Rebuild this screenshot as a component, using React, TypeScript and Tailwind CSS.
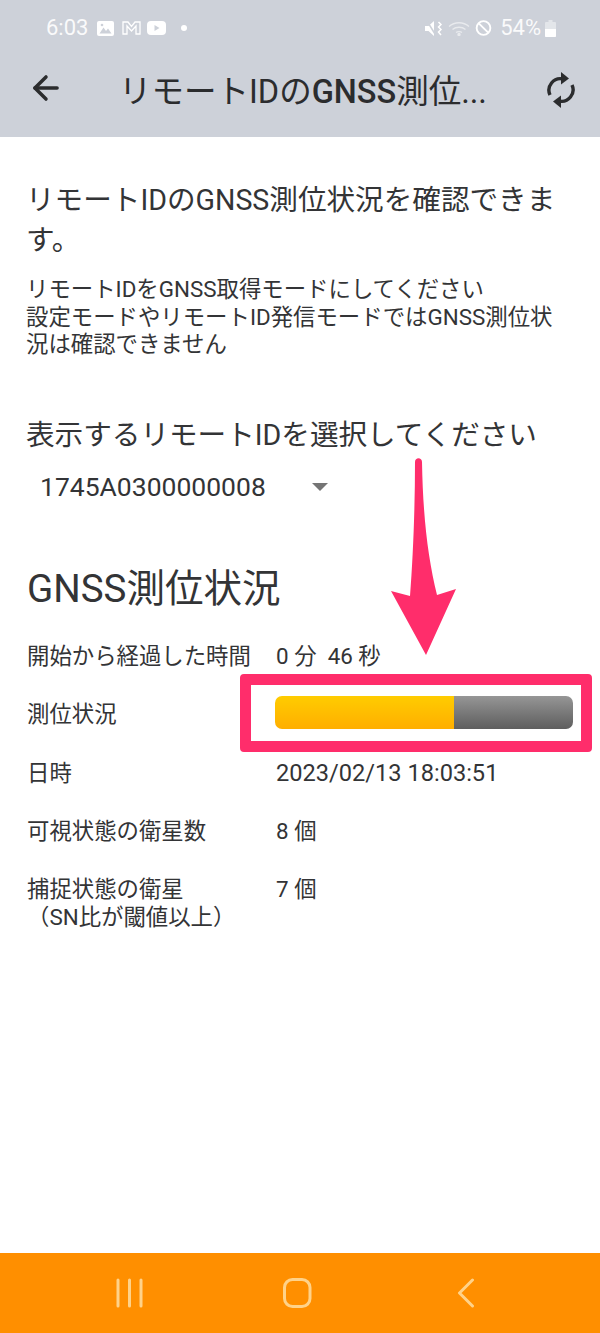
import React from 'react';
import { ArrowLeft } from 'lucide-react';

const font = { fontFamily: '"Roboto", "Noto Sans CJK JP", sans-serif' };

const rows = [
  { label: '開始から経過した時間', value: '0 分  46 秒' },
  { label: '測位状況', bar: true },
  { label: '日時', value: '2023/02/13 18:03:51', wide: true },
  { label: '可視状態の衛星数', value: '8 個' },
];

const StatusBar = () => (
  <div className="flex h-[55px] items-center justify-between pl-[46px] pr-[44px] pt-[1px] text-white">
    <div className="flex items-center">
      <span className="w-[51px] text-[22px] leading-none opacity-90">6:03</span>
      <svg width="17" height="15" viewBox="0 0 17 15">
        <rect x="0" y="0" width="17" height="15" rx="2" fill="white" />
        <path d="M2.500 12.500 L6.500 6.500 L9 10 L11 7.500 L14.500 12.500 Z" fill="#cdd1d9" />
        <circle cx="5" cy="4" r="1.300" fill="#cdd1d9" />
      </svg>
      <svg width="19" height="14" viewBox="0 0 19 14" fill="none" stroke="white" strokeWidth="1.300" className="ml-[8px]">
        <path d="M1 13 V1 L6 1 L9.500 5.500 L13 1 H18 V13 H14 V5 L9.500 10 L5 5 V13 Z" />
      </svg>
      <svg width="19" height="14" viewBox="0 0 19 14" className="ml-[6px]">
        <rect x="0" y="0" width="19" height="14" rx="4" fill="white" />
        <path d="M7.500 4 L12.500 7 L7.500 10 Z" fill="#cdd1d9" />
      </svg>
      <div className="ml-[15px] h-[6px] w-[6px] rounded-full bg-white" />
    </div>
    <div className="flex items-center">
      <svg width="19" height="17" viewBox="0 0 19 17" fill="white">
        <path d="M1 6 H4.500 L10 1 V16 L4.500 11 H1 Z" />
        <path d="M3 1 L11 14" stroke="#cdd1d9" strokeWidth="1.500" />
        <path d="M14.500 2 L17 4.500 L14.500 7 L17 9.500 L14.500 12 L17 15" fill="none" stroke="white" strokeWidth="1.500" />
      </svg>
      <svg width="22" height="15" viewBox="0 0 22 15" fill="none" stroke="white" strokeWidth="1.400" opacity="0.55" className="ml-[5px]">
        <path d="M1 5.500 C6.500 0.500 15.500 0.500 21 5.500 M4.500 8.500 C8 5.500 14 5.500 17.500 8.500 M8 11.500 C9.500 10.300 12.500 10.300 14 11.500" />
        <circle cx="11" cy="13.500" r="1" fill="white" />
      </svg>
      <svg width="17" height="16" viewBox="0 0 17 17" fill="none" stroke="white" strokeWidth="2" className="ml-[5px]">
        <circle cx="8.500" cy="8.500" r="7.300" />
        <path d="M3.500 3.500 L13.500 13.500" />
      </svg>
      <span className="ml-[8px] text-[22px] leading-none opacity-90">54%</span>
      <svg width="11" height="17" viewBox="0 0 11 17" className="ml-[4px]">
        <path d="M3.500 0 H7.500 V2 H10 A1 1 0 0 1 11 3 V16 A1 1 0 0 1 10 17 H1 A1 1 0 0 1 0 16 V3 A1 1 0 0 1 1 2 H3.500 Z" fill="white" opacity="0.45" />
        <path d="M0 9 H11 V16 A1 1 0 0 1 10 17 H1 A1 1 0 0 1 0 16 Z" fill="white" />
      </svg>
    </div>
  </div>
);

const Toolbar = () => (
  <div className="flex h-[82px] items-start pl-[27px] pt-[8px] text-[#2b2c2e]">
    <ArrowLeft size={38} strokeWidth={2.200} className="mt-[6px]" />
    <div className="ml-[54px] mt-[6px] w-[387px] text-[32.500px] leading-[46px] whitespace-nowrap">
      リモートIDの<span className="font-medium">GNSS</span>測位...
    </div>
    <svg width="30" height="38" viewBox="0 0 30 38" fill="none" stroke="#2b2c2e" strokeWidth="3.400" className="ml-[40px] mt-[8px]">
      <path d="M4 24 A11.500 11.500 0 0 1 17 8" />
      <path d="M15 1 L23 7.500 L15 13.500 Z" fill="#2b2c2e" stroke="none" />
      <path d="M26 14 A11.500 11.500 0 0 1 13 30" />
      <path d="M15 24.500 L7 30.500 L15 37 Z" fill="#2b2c2e" stroke="none" />
    </svg>
  </div>
);

const ProgressBar = () => (
  <div className="-ml-[1px] mb-[6px] flex h-[33px] w-[298px] shrink-0 overflow-hidden rounded-[7px]">
    <div className="w-[179px] bg-gradient-to-b from-[#ffcc00] to-[#ffae00]" />
    <div className="flex-1 bg-gradient-to-b from-[#969696] to-[#5e5e5e]" />
  </div>
);

const NavBar = () => (
  <div className="flex h-[80px] items-start bg-[#ff8f00] pt-[25px]">
    <svg width="600" height="30" viewBox="0 0 600 30" fill="none" stroke="#ffd289" strokeWidth="3" strokeLinecap="round" strokeLinejoin="round">
      <path d="M118 2 V28 M129.500 2 V28 M141 2 V28" />
      <rect x="284.500" y="1.500" width="25.500" height="27" rx="8" />
      <path d="M472.500 2 L459.500 15 L472.500 28" />
    </svg>
  </div>
);

export default function App() {
  return (
    <div className="relative flex h-[1333px] w-[600px] flex-col overflow-hidden bg-white text-[#333436]" style={font}>
      <div className="h-[137px] bg-[#cdd1d9]">
        <StatusBar />
        <Toolbar />
      </div>

      <main className="flex-1 pl-[26px] pr-[40px] pt-[43px]">
        <h1 className="text-[28.600px] leading-[40px]">リモートIDのGNSS測位状況を確認できます。</h1>
        <p className="mt-[16px] text-[22.400px] leading-[27.500px]">
          リモートIDをGNSS取得モードにしてください
          <br />
          設定モードやリモートID発信モードではGNSS測位状況は確認できません
        </p>

        <div className="mt-[56px] text-[28.600px] leading-[40px]">表示するリモートIDを選択してください</div>
        <div className="mt-[12px] flex h-[40px] items-center pl-[14px] text-[26.500px]">
          <span>1745A0300000008</span>
          <span className="ml-[46px] h-0 w-0 border-x-[8px] border-t-[8px] border-x-transparent border-t-[#757575]" />
        </div>

        <h2 className="ml-[1px] mt-[54px] text-[38.500px] leading-[56px]">GNSS測位状況</h2>

        <div className="ml-[1px] mt-[24px] flex flex-col gap-[26.500px]">
          {rows.map((row) => (
            <div key={row.label} className="flex h-[32px] items-center text-[22.400px]">
              <div className="w-[249px] shrink-0">{row.label}</div>
              {row.bar ? (
                <ProgressBar />
              ) : (
                <div className={row.wide ? 'whitespace-pre text-[23.600px]' : 'whitespace-pre'}>{row.value}</div>
              )}
            </div>
          ))}
          <div className="flex text-[22.400px] leading-[28px]">
            <div className="w-[249px] shrink-0">
              捕捉状態の衛星
              <br />
              （SN比が閾値以上）
            </div>
            <div>7 個</div>
          </div>
        </div>
      </main>

      <NavBar />

      {/* annotation over the screenshot */}
      <div className="absolute left-[240px] top-[674px] h-[78px] w-[352px] rounded-[4px] border-[11px] border-[#ff2d6b]" />
      <svg className="absolute left-[390px] top-[458px]" width="68" height="198" viewBox="0 0 68 198">
        <path d="M25 4 C25 -1 32 -1 32 4 C33 60 38 100 47 137 L66 131 L36 197 L1 133 L20 138 C23 100 25 50 25 4 Z" fill="#ff2d6b" />
      </svg>
    </div>
  );
}
